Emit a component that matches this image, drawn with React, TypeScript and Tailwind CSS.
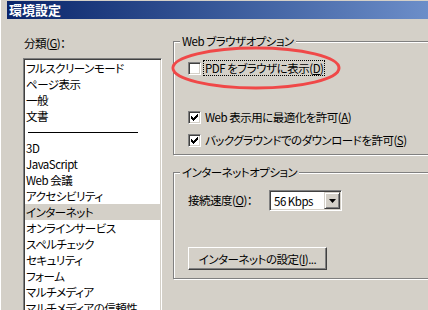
const ITEMS = [
  "フルスクリーンモード",
  "ページ表示",
  "一般",
  "文書",
  "---",
  "3D",
  "JavaScript",
  "Web 会議",
  "アクセシビリティ",
  "インターネット",
  "オンラインサービス",
  "スペルチェック",
  "セキュリティ",
  "フォーム",
  "マルチメディア",
  "マルチメディアの信頼性",
];

const SELECTED = "インターネット";

function CheckBox({ checked }: { checked?: boolean }) {
  return (
    <span className="w-[13px] h-[13px] shrink-0 bg-white border border-t-[#808080] border-l-[#808080] border-b-white border-r-white shadow-[inset_1px_1px_0_#404040,inset_-1px_-1px_0_#d4d0c8] flex items-center justify-center">
      {checked && (
        <svg width="7" height="7" viewBox="0 0 7 7">
          <path d="M0 2h1v1h1v1h1V3h1V2h1V1h1V0h1v3H6v1H5v1H4v1H3v1H2V6H1V5H0z" fill="#000" />
        </svg>
      )}
    </span>
  );
}

function GroupBox({
  label,
  className,
  children,
}: {
  label: string;
  className: string;
  children: React.ReactNode;
}) {
  return (
    <div
      className={`relative border border-[#808080] shadow-[inset_1px_1px_0_#fff,1px_1px_0_#fff] ${className}`}
    >
      <span className="absolute left-[6px] -top-[9px] px-[2px] bg-[#d4d0c8] leading-[16px]">
        {label}
      </span>
      {children}
    </div>
  );
}

export default function App() {
  return (
    <div className="w-[428px] h-[310px] overflow-hidden bg-[#d4d0c8] text-[11.5px] tracking-[-0.5px] text-black [font-family:'Noto_Sans_CJK_JP',sans-serif] [font-feature-settings:'palt'] border-l border-l-white">
      <div className="mt-[1px] ml-[6px] h-[18px] bg-gradient-to-r from-[#0a246a] to-[#6c8ec9] pl-[2px] flex items-center">
        <span className="text-white font-bold text-[13px] tracking-normal leading-[18px]">環境設定</span>
      </div>

      <div className="flex items-start">
        <div className="ml-[22px] w-[139px] shrink-0">
          <div className="mt-[16px] h-[16px] leading-[16px] pl-[1px]">
            分類(<u>G</u>)：
          </div>
          <div className="mt-[7px] h-[260px] bg-white border border-t-[#808080] border-l-[#808080] border-b-white border-r-white shadow-[inset_1px_1px_0_#404040,inset_-1px_-1px_0_#d4d0c8] p-[1px]">
            {ITEMS.map((item) =>
              item === "---" ? (
                <div key={item} className="h-[16px] flex items-center pl-[3px]">
                  <div className="w-[110px] h-px bg-black" />
                </div>
              ) : (
                <div
                  key={item}
                  className={`h-[16px] leading-[16px] pl-[1px] whitespace-nowrap ${
                    item === SELECTED ? "bg-[#d4d0c8]" : ""
                  }`}
                >
                  {item}
                </div>
              )
            )}
          </div>
        </div>

        <div className="ml-[11px] mt-[22px] w-[300px] shrink-0 relative">
          <GroupBox label="Web ブラウザオプション" className="h-[114px] pl-[14px] pt-[18px]">
            <div className="flex items-center gap-[2px] h-[16px]">
              <CheckBox />
              <span className="border border-dotted border-black leading-[14px] px-[1px] whitespace-nowrap">
                PDF をブラウザに表示(<u>D</u>)
              </span>
            </div>
            <div className="flex items-center gap-[2px] h-[16px] mt-[33px]">
              <CheckBox checked />
              <span className="border border-transparent leading-[14px] px-[1px] whitespace-nowrap">
                Web 表示用に最適化を許可(<u>A</u>)
              </span>
            </div>
            <div className="flex items-center gap-[2px] h-[16px] mt-[7px]">
              <CheckBox checked />
              <span className="border border-transparent leading-[14px] px-[1px] whitespace-nowrap">
                バックグラウンドでのダウンロードを許可(<u>S</u>)
              </span>
            </div>
          </GroupBox>

          <GroupBox label="インターネットオプション" className="mt-[17px] h-[107px] pl-[14px] pt-[17px]">
            <div className="flex items-center h-[21px]">
              <span className="w-[81px] whitespace-nowrap">
                接続速度(<u>O</u>)：
              </span>
              <div className="w-[73px] h-[21px] bg-white border border-t-[#808080] border-l-[#808080] border-b-white border-r-white shadow-[inset_1px_1px_0_#404040,inset_-1px_-1px_0_#d4d0c8] flex items-center p-[1px]">
                <span className="flex-1 pl-[3px] leading-[16px]">56 Kbps</span>
                <span className="w-[16px] h-[17px] bg-[#d4d0c8] border border-t-[#d4d0c8] border-l-[#d4d0c8] border-b-[#404040] border-r-[#404040] shadow-[inset_1px_1px_0_#fff,inset_-1px_-1px_0_#808080] flex items-center justify-center">
                  <svg width="7" height="4" viewBox="0 0 7 4">
                    <path d="M0 0h7L3.5 4z" fill="#000" />
                  </svg>
                </span>
              </div>
            </div>
            <button className="mt-[36px] w-[139px] h-[23px] bg-[#d4d0c8] border border-t-white border-l-white border-b-[#404040] border-r-[#404040] shadow-[inset_-1px_-1px_0_#808080] leading-[16px] whitespace-nowrap">
              インターネットの設定(<u>I</u>)...
            </button>
          </GroupBox>

          <svg
            className="absolute left-[-3px] top-[4px] pointer-events-none"
            width="172"
            height="46"
            viewBox="0 0 172 46"
          >
            <ellipse cx="86" cy="23" rx="83" ry="20" fill="none" stroke="#f04848" strokeWidth="3" />
          </svg>
        </div>
      </div>
    </div>
  );
}
